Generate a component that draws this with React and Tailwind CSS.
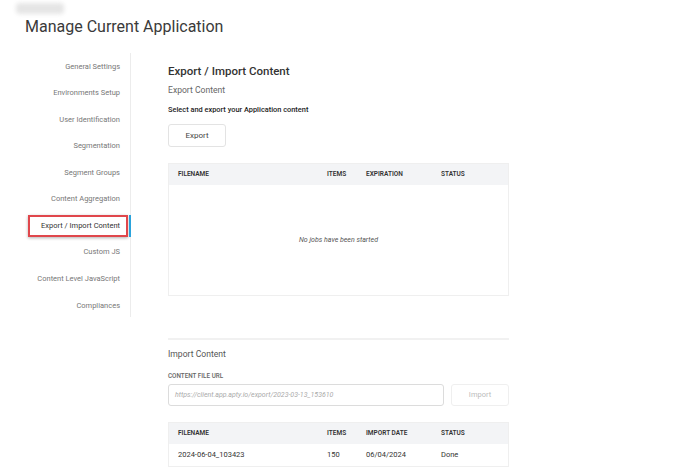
import React from "react";

const menu = [
  "General Settings",
  "Environments Setup",
  "User Identification",
  "Segmentation",
  "Segment Groups",
  "Content Aggregation",
  "Export / Import Content",
  "Custom JS",
  "Content Level JavaScript",
  "Compliances",
];

const TableHead = ({ third }) => (
  <div className="flex h-[21px] items-center bg-[#f3f4f6] text-[6.5px] font-semibold uppercase text-[#333]">
    <div className="w-[158px] pl-[9px]">Filename</div>
    <div className="w-[39px]">Items</div>
    <div className="w-[75px]">{third}</div>
    <div>Status</div>
  </div>
);

export default function App() {
  return (
    <div
      className="relative h-[472px] w-[688px] overflow-hidden bg-white"
      style={{ fontFamily: "Roboto, 'Liberation Sans', sans-serif" }}
    >
      <div className="absolute left-[16px] top-[3px] h-[11px] w-[48px] rounded-sm bg-[#e5e5e5] blur-[2px]" />
      <h1 className="pl-[25px] pt-[16px] text-[16px] leading-[22px] text-[#3a3a3a]">
        Manage Current Application
      </h1>

      <div className="mt-[14px] flex">
        <div className="mt-[1px] h-[264px] w-[131px] border-r border-[#ececec]">
          {menu.map((m) => {
            const active = m === "Export / Import Content";
            return (
              <div key={m} className="flex h-[26.55px] items-center justify-end">
                {active ? (
                  <div className="relative flex h-[22px] w-[101px] items-center justify-end">
                    <div className="absolute -left-[1px] top-0 h-[22px] w-[100px] border-2 border-[#e0474c] shadow-[0_1px_3px_rgba(0,0,0,0.3)]" />
                    <span className="pr-[10px] text-[7.5px] text-[#333]">{m}</span>
                    <div className="absolute -right-[1px] top-0 h-[22px] w-[2px] bg-[#2aa3dc]" />
                  </div>
                ) : (
                  <span className="pr-[10px] text-[7.5px] text-[#777]">{m}</span>
                )}
              </div>
            );
          })}
        </div>

        <div className="ml-[37px] w-[341px] pt-[11px]">
          <h2 className="text-[11.5px] font-medium leading-[16px] text-[#333]">Export / Import Content</h2>
          <div className="mt-[4px] text-[8.6px] leading-[14px] text-[#666]">Export Content</div>
          <div className="mt-[7px] text-[7.4px] font-medium leading-[12px] text-[#222]">
            Select and export your Application content
          </div>
          <button className="mt-[8px] h-[23px] w-[58px] rounded-[3px] border border-[#e3e3e3] text-[8px] text-[#444]">
            Export
          </button>

          <div className="mt-[16px] border border-[#efefef]">
            <TableHead third="Expiration" />
            <div className="flex h-[110px] items-center justify-center text-[7px] italic text-[#555]">
              No jobs have been started
            </div>
          </div>

          <div className="mt-[42px] border-t-2 border-[#f1f1f1]" />

          <div className="mt-[7px] text-[8.6px] leading-[14px] text-[#555]">Import Content</div>
          <div className="mt-[10px] text-[6.3px] font-medium uppercase leading-[10px] text-[#666]">
            Content File URL
          </div>
          <div className="mt-[3px] flex gap-[7px]">
            <div className="flex h-[22px] w-[276px] items-center rounded-[3px] border border-[#dcdcdc] pl-[6px] text-[7px] italic text-[#aaa]">
              https://client.app.apty.io/export/2023-03-13_153610
            </div>
            <button className="h-[22px] w-[58px] rounded-[3px] border border-[#efefef] text-[7.5px] text-[#bbb]">
              Import
            </button>
          </div>

          <div className="mt-[16px] border border-[#efefef]">
            <TableHead third="Import Date" />
            <div className="flex h-[22px] items-center text-[7.5px] text-[#333]">
              <div className="w-[158px] pl-[9px]">2024-06-04_103423</div>
              <div className="w-[39px]">150</div>
              <div className="w-[75px]">06/04/2024</div>
              <div>Done</div>
            </div>
          </div>
        </div>
      </div>
    </div>
  );
}
